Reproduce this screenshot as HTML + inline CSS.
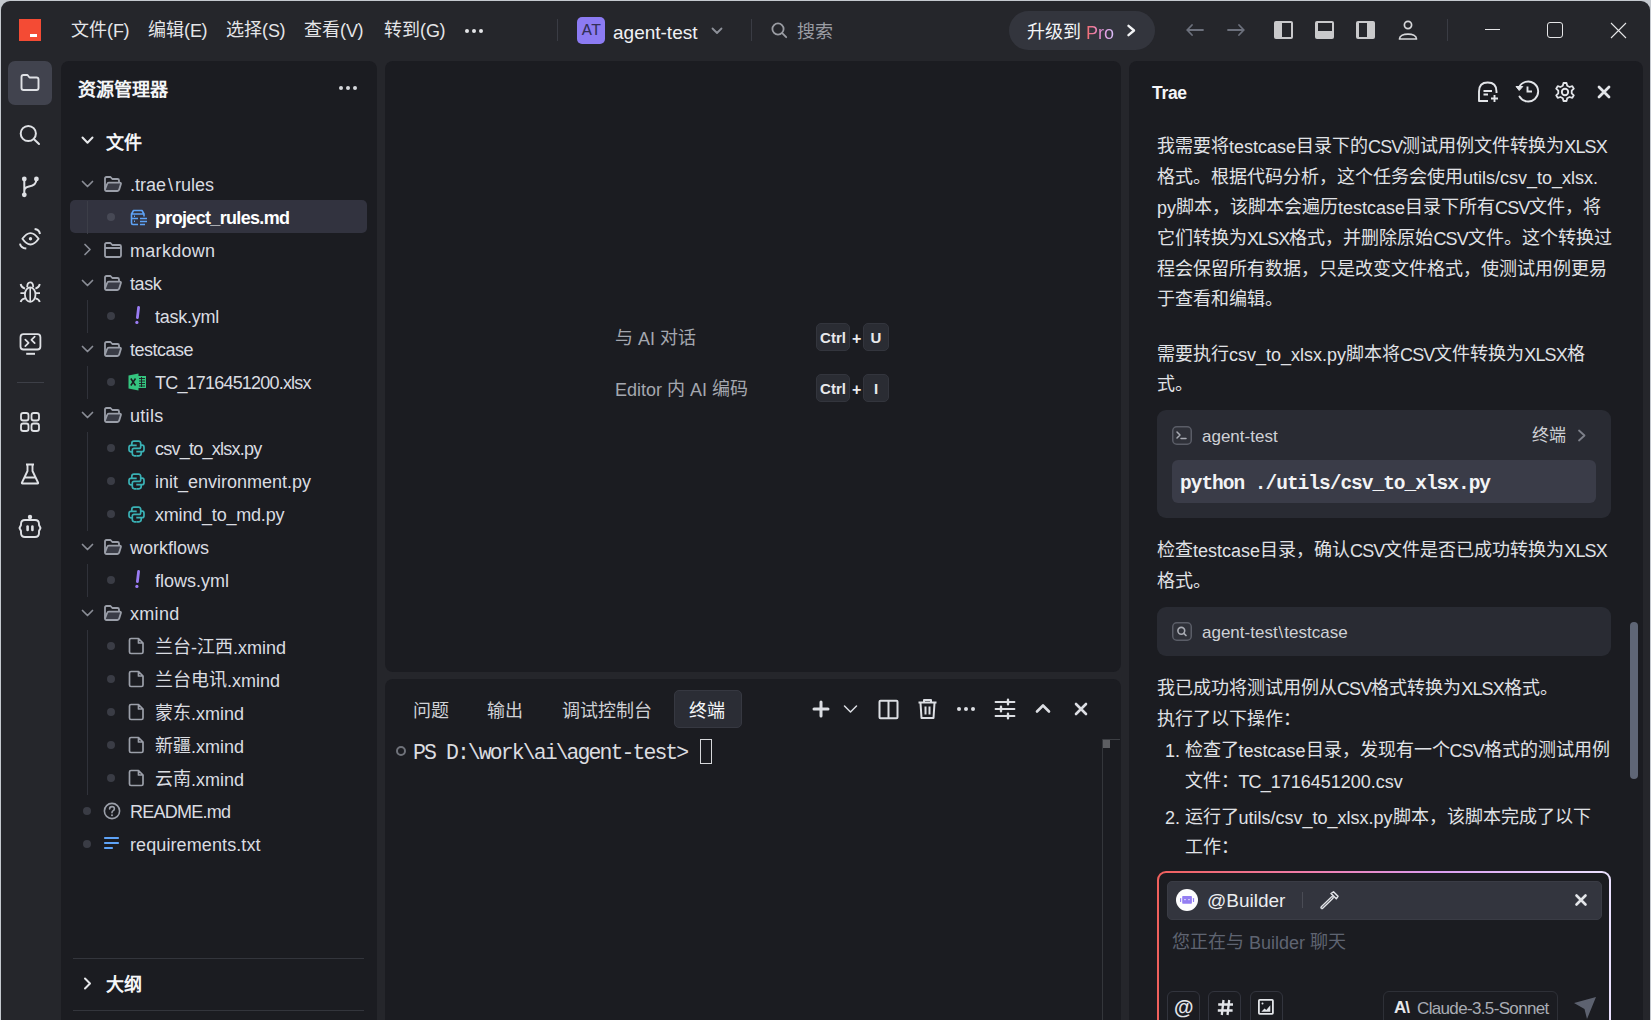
<!DOCTYPE html>
<html lang="zh-CN"><head><meta charset="utf-8">
<style>
*{box-sizing:border-box;margin:0;padding:0}
html,body{width:1651px;height:1020px;overflow:hidden;background:#c5c9cf}
body{font-family:"Liberation Sans",sans-serif;color:#d3d5da;position:relative}
.a{position:absolute;white-space:nowrap}
#win{position:absolute;left:1px;top:1px;width:1649px;height:1030px;background:#25262b;border-radius:9px 9px 0 0;overflow:hidden}
.panel{position:absolute;background:#1b1c21;border-radius:8px}
svg{position:absolute;overflow:visible}
.mono{font-family:"Liberation Mono",monospace}
</style></head>
<body>
<div id="win"></div>
<div class="panel" style="left:61px;top:61px;width:316px;height:980px"></div>
<div class="panel" style="left:385px;top:61px;width:736px;height:611px"></div>
<div class="panel" style="left:385px;top:679px;width:736px;height:360px"></div>
<div class="panel" style="left:1129px;top:61px;width:514px;height:980px"></div>

<div class="a" style="left:19px;top:19px;width:22px;height:22px;background:#f44b34"></div>
<div class="a" style="left:30px;top:34px;width:7px;height:3px;background:#fff"></div>
<div class="a" style="left:71px;top:19.2px;font-size:18px;line-height:22px;font-weight:400;color:#e4e5e8;letter-spacing:0px;">文件(<span style="position:relative;top:1px;letter-spacing:-0.6px">F</span>)</div>
<div class="a" style="left:148px;top:19.2px;font-size:18px;line-height:22px;font-weight:400;color:#e4e5e8;letter-spacing:0px;">编辑(<span style="position:relative;top:1px;letter-spacing:-0.6px">E</span>)</div>
<div class="a" style="left:226px;top:19.2px;font-size:18px;line-height:22px;font-weight:400;color:#e4e5e8;letter-spacing:0px;">选择(<span style="position:relative;top:1px;letter-spacing:-0.6px">S</span>)</div>
<div class="a" style="left:304px;top:19.2px;font-size:18px;line-height:22px;font-weight:400;color:#e4e5e8;letter-spacing:0px;">查看(<span style="position:relative;top:1px;letter-spacing:-0.6px">V</span>)</div>
<div class="a" style="left:384px;top:19.2px;font-size:18px;line-height:22px;font-weight:400;color:#e4e5e8;letter-spacing:0px;">转到(<span style="position:relative;top:1px;letter-spacing:-0.6px">G</span>)</div>
<div class="a" style="left:465px;top:29px;width:4px;height:4px;border-radius:2px;background:#e4e5e8;box-shadow:7px 0 0 #e4e5e8,14px 0 0 #e4e5e8"></div>
<div class="a" style="left:557px;top:19px;width:1px;height:22px;background:#3a3c44"></div>
<div class="a" style="left:577px;top:17px;width:28px;height:27px;background:#8c7bf3;border-radius:5px;font-family:'Liberation Mono',monospace;font-size:17px;line-height:27px;text-align:center;color:#33305a;letter-spacing:-1px">AT</div>
<div class="a" style="left:613px;top:20.5px;font-size:19px;line-height:24px;font-weight:400;color:#f0f1f4;letter-spacing:0px;">agent-test</div>
<svg style="left:711px;top:27px" width="12" height="8" viewBox="0 0 12 8"><path d="M1.5 1.5 L6 6 L10.5 1.5" fill="none" stroke="#8d9099" stroke-width="1.8" stroke-linecap="round" stroke-linejoin="round"/></svg>
<div class="a" style="left:751px;top:19px;width:1px;height:22px;background:#3a3c44"></div>
<svg style="left:771px;top:22px" width="17" height="17" viewBox="0 0 17 17"><circle cx="7" cy="7" r="5.6" fill="none" stroke="#9a9ca3" stroke-width="1.8"/><path d="M11.2 11.2 L15.2 15.2" stroke="#9a9ca3" stroke-width="1.8" stroke-linecap="round"/></svg>
<div class="a" style="left:797px;top:20.8px;font-size:18px;line-height:22px;font-weight:400;color:#9a9ca3;letter-spacing:0px;">搜索</div>
<div class="a" style="left:1009px;top:11px;width:146px;height:39px;border-radius:20px;background:#33353d"></div>
<div class="a" style="left:1027px;top:21.3px;font-size:18px;line-height:22px;font-weight:400;color:#f4f5f7;letter-spacing:0px;">升级到 <span style="position:relative;top:1px;background:linear-gradient(90deg,#f26b6b 0%,#e690d8 55%,#d9c0fa 100%);-webkit-background-clip:text;color:transparent">Pro</span></div>
<svg style="left:1126px;top:24px" width="11" height="13" viewBox="0 0 11 13"><path d="M2.5 1.8 L8 6.5 L2.5 11.2" fill="none" stroke="#f2f3f5" stroke-width="2.4" stroke-linecap="round" stroke-linejoin="round"/></svg>
<svg style="left:1186px;top:24px" width="18" height="12" viewBox="0 0 18 12"><path d="M1.2 6 H17 M6 1 L1.2 6 L6 11" fill="none" stroke="#6c707c" stroke-width="1.8" stroke-linecap="round" stroke-linejoin="round"/></svg>
<svg style="left:1227px;top:24px" width="18" height="12" viewBox="0 0 18 12"><path d="M1 6 H16.8 M12 1 L16.8 6 L12 11" fill="none" stroke="#6c707c" stroke-width="1.8" stroke-linecap="round" stroke-linejoin="round"/></svg>
<div class="a" style="left:1274px;top:21px;width:19px;height:18px;background:#c9c9cb;border-radius:2px"><div class="a" style="left:8px;top:2px;width:8.5px;height:14px;background:#25262b"></div></div>
<div class="a" style="left:1315px;top:21px;width:19px;height:18px;background:#c9c9cb;border-radius:2px"><div class="a" style="left:2.5px;top:2px;width:14px;height:8px;background:#25262b"></div></div>
<div class="a" style="left:1356px;top:21px;width:19px;height:18px;background:#c9c9cb;border-radius:2px"><div class="a" style="left:2.5px;top:2px;width:8px;height:14px;background:#25262b"></div></div>
<svg style="left:1398px;top:20px" width="20" height="21" viewBox="0 0 20 21"><circle cx="10" cy="5" r="3.6" fill="none" stroke="#d6d7da" stroke-width="1.7"/><path d="M1.5 19 C1.5 12.5 18.5 12.5 18.5 19 Z" fill="none" stroke="#d6d7da" stroke-width="1.7" stroke-linejoin="round"/></svg>
<div class="a" style="left:1447px;top:19px;width:1px;height:22px;background:#3a3c44"></div>
<div class="a" style="left:1485px;top:29px;width:15px;height:1px;background:#e6e6e8"></div>
<div class="a" style="left:1547px;top:22px;width:16px;height:16px;border:1px solid #e6e6e8;border-radius:3px"></div>
<svg style="left:1610px;top:22px" width="17" height="17" viewBox="0 0 17 17"><path d="M1 1 L16 16 M16 1 L1 16" stroke="#e6e6e8" stroke-width="1.1"/></svg>
<div class="a" style="left:8px;top:61px;width:44px;height:44px;background:#41434e;border-radius:7px"></div>
<svg style="left:20px;top:73px" width="20" height="19" viewBox="0 0 20 19"><path d="M1.5 4 Q1.5 2 3.5 2 H7.5 L9.5 4.5 H16.5 Q18.5 4.5 18.5 6.5 V15 Q18.5 17 16.5 17 H3.5 Q1.5 17 1.5 15 Z" fill="none" stroke="#dfe1e5" stroke-width="1.9" stroke-linejoin="round"/></svg>
<svg style="left:18px;top:122px" width="24" height="24" viewBox="0 0 24 24"><circle cx="10.3" cy="11.5" r="7.6" fill="none" stroke="#dfe1e5" stroke-width="2"/><path d="M16 17.2 L21 22" stroke="#dfe1e5" stroke-width="2" stroke-linecap="round"/></svg>
<svg style="left:18px;top:174px" width="24" height="24" viewBox="0 0 24 24"><circle cx="6.3" cy="5" r="2.4" fill="#dfe1e5"/><circle cx="18.4" cy="5" r="2.4" fill="#dfe1e5"/><circle cx="6.3" cy="20.8" r="2.4" fill="#dfe1e5"/><path d="M6.3 5 V20.8 M18.4 5 Q18.4 11.5 11 12.5 Q6.3 13.2 6.3 17" fill="none" stroke="#dfe1e5" stroke-width="2"/></svg>
<svg style="left:10px;top:220px" width="40" height="40" viewBox="0 0 40 40"><path d="M12.4 18.8 Q20.5 7.4 28.6 18.8 Q20.5 30.2 12.4 18.8 Z" fill="none" stroke="#dfe1e5" stroke-width="1.9" stroke-linejoin="round"/><circle cx="20.5" cy="18.8" r="1.7" fill="#dfe1e5"/><path d="M24.6 9 Q29.3 9.6 30 14" fill="none" stroke="#dfe1e5" stroke-width="2" stroke-linecap="butt"/><path d="M10 23.6 Q10.7 28 16.3 28.6" fill="none" stroke="#dfe1e5" stroke-width="2" stroke-linecap="butt"/></svg>
<svg style="left:10px;top:275px" width="40" height="85" viewBox="0 0 40 85"><path d="M17.2 12.2 Q17.2 7.3 20.2 7.3 Q23.2 7.3 23.2 12.2" fill="none" stroke="#dfe1e5" stroke-width="1.8"/><ellipse cx="20.2" cy="19.6" rx="5.3" ry="7.2" fill="none" stroke="#dfe1e5" stroke-width="1.8"/><path d="M20.2 12.5 V26.6" stroke="#dfe1e5" stroke-width="1.6"/><path d="M10.6 9 Q11.4 12.6 15 13.6 M29.8 9 Q29 12.6 25.4 13.6 M10.4 18.2 H15 M25.4 18.2 H30 M15 23.4 Q11.4 24 10.6 27 M25.4 23.4 Q29 24 29.8 27" fill="none" stroke="#dfe1e5" stroke-width="1.8" stroke-linecap="butt"/></svg>
<svg style="left:10px;top:275px" width="40" height="85" viewBox="0 0 40 85"><rect x="10.5" y="59.2" width="19.9" height="15.3" rx="3" fill="none" stroke="#dfe1e5" stroke-width="1.8"/><path d="M16.2 78.8 H25" stroke="#dfe1e5" stroke-width="2"/><path d="M15.3 64.6 L18.6 67.9 L15.3 71.2 M24.7 61.6 L21.4 64.9 L24.7 68.2" fill="none" stroke="#dfe1e5" stroke-width="1.7" stroke-linecap="round" stroke-linejoin="round"/></svg>
<div class="a" style="left:17px;top:382px;width:27px;height:1px;background:#3d3f47"></div>
<svg style="left:18px;top:410px" width="24" height="24" viewBox="0 0 24 24"><rect x="3" y="3" width="7.5" height="7.5" rx="2.3" fill="none" stroke="#dfe1e5" stroke-width="1.8"/><rect x="13.5" y="3" width="7.5" height="7.5" rx="2.3" fill="none" stroke="#dfe1e5" stroke-width="1.8"/><rect x="3" y="13.5" width="7.5" height="7.5" rx="2.3" fill="none" stroke="#dfe1e5" stroke-width="1.8"/><rect x="13.5" y="13.5" width="7.5" height="7.5" rx="2.3" fill="none" stroke="#dfe1e5" stroke-width="1.8"/></svg>
<svg style="left:18px;top:462px" width="24" height="24" viewBox="0 0 24 24"><path d="M8 2.5 H16 M9.5 2.5 V9 L4 20.5 Q3.5 21.5 4.5 21.5 H19.5 Q20.5 21.5 20 20.5 L14.5 9 V2.5 M6.5 15.5 H17.5" fill="none" stroke="#dfe1e5" stroke-width="1.9" stroke-linejoin="round"/></svg>
<svg style="left:18px;top:514px" width="24" height="25" viewBox="0 0 24 25"><circle cx="12" cy="3" r="2.2" fill="#dfe1e5"/><path d="M7 6 H17 Q21 6 21 10 V11 L22.5 14 L21 17 V19 Q21 23 17 23 H7 Q3 23 3 19 V17 L1.5 14 L3 11 V10 Q3 6 7 6 Z" fill="none" stroke="#dfe1e5" stroke-width="1.9" stroke-linejoin="round"/><rect x="8.3" y="11.3" width="2.6" height="6" rx="1.3" fill="#dfe1e5"/><rect x="13.1" y="11.3" width="2.6" height="6" rx="1.3" fill="#dfe1e5"/></svg>
<div class="a" style="left:78px;top:78.5px;font-size:18px;line-height:22px;font-weight:700;color:#f5f6f8;letter-spacing:0px;">资源管理器</div>
<div class="a" style="left:339px;top:86px;width:4px;height:4px;border-radius:2px;background:#d6d8dc;box-shadow:7px 0 0 #d6d8dc,14px 0 0 #d6d8dc"></div>
<svg style="left:81px;top:136px" width="13" height="9" viewBox="0 0 13 9"><path d="M1.5 1.5 L6.5 6.8 L11.5 1.5" fill="none" stroke="#e6e7ea" stroke-width="2" stroke-linecap="round" stroke-linejoin="round"/></svg>
<div class="a" style="left:106px;top:131.5px;font-size:18px;line-height:22px;font-weight:700;color:#f5f6f8;letter-spacing:0px;">文件</div>
<div class="a" style="left:70px;top:200px;width:297px;height:33px;background:#32333f;border-radius:5px"></div>
<div class="a" style="left:87px;top:201px;width:1px;height:33px;background:#3c3e48"></div>
<div class="a" style="left:87px;top:300px;width:1px;height:33px;background:#30323a"></div>
<div class="a" style="left:87px;top:366px;width:1px;height:33px;background:#30323a"></div>
<div class="a" style="left:87px;top:432px;width:1px;height:99px;background:#30323a"></div>
<div class="a" style="left:87px;top:564px;width:1px;height:33px;background:#30323a"></div>
<div class="a" style="left:87px;top:630px;width:1px;height:165px;background:#30323a"></div>
<svg style="left:81px;top:180px" width="13" height="9" viewBox="0 0 13 9"><path d="M1.5 1.5 L6.5 6.5 L11.5 1.5" fill="none" stroke="#8a8d96" stroke-width="1.7" stroke-linecap="round" stroke-linejoin="round"/></svg>
<svg style="left:103px;top:175px" width="20" height="18" viewBox="0 0 20 18"><path d="M2 14.5 V3.5 Q2 2 3.5 2 H7.5 L9.3 4 H14.5 Q16 4 16 5.5 V7.5" fill="none" stroke="#9b9fa9" stroke-width="1.8" stroke-linejoin="round"/><path d="M2 14.5 L4.2 8.8 Q4.6 7.6 5.8 7.6 H16.8 Q18.3 7.6 17.9 9 L16.2 14.6 Q15.8 16 14.4 16 H3.5 Q2 16 2 14.5 Z" fill="#3a3c46" stroke="#9b9fa9" stroke-width="1.8" stroke-linejoin="round"/></svg>
<div class="a" style="left:130px;top:174px;font-size:18px;line-height:22px;font-weight:400;color:#dadce1;letter-spacing:0px;">.trae<span style="padding:0 2px">\</span>rules</div>
<div class="a" style="left:107px;top:213px;width:8px;height:8px;border-radius:4px;background:#474955"></div>
<svg style="left:130px;top:209px" width="18" height="17" viewBox="0 0 18 17"><path d="M1.5 9 V5 L3.5 1.5 H12 L14 5 V7.5 M1.5 5 H14 M1.5 9 V14 Q1.5 15.5 3 15.5 H8" fill="none" stroke="#5ea3f7" stroke-width="1.6" stroke-linejoin="round"/><path d="M1.5 9.5 H8 M4 7.3 H5 M4 12.3 H5 M10 9.5 H17 M10 12.5 H17 M10 15.5 H15" stroke="#5ea3f7" stroke-width="1.6"/></svg>
<div class="a" style="left:155px;top:207px;font-size:18px;line-height:22px;font-weight:700;color:#ffffff;letter-spacing:-0.67px;">project_rules.md</div>
<svg style="left:83px;top:243px" width="9" height="13" viewBox="0 0 9 13"><path d="M2 1.5 L7 6.5 L2 11.5" fill="none" stroke="#8a8d96" stroke-width="1.7" stroke-linecap="round" stroke-linejoin="round"/></svg>
<svg style="left:103px;top:241px" width="20" height="18" viewBox="0 0 20 18"><path d="M2 3.5 Q2 2 3.5 2 H7.5 L9.3 4 H16.5 Q18 4 18 5.5 V14.5 Q18 16 16.5 16 H3.5 Q2 16 2 14.5 Z M2 7 H18" fill="none" stroke="#9b9fa9" stroke-width="1.8" stroke-linejoin="round"/></svg>
<div class="a" style="left:130px;top:240px;font-size:18px;line-height:22px;font-weight:400;color:#dadce1;letter-spacing:0.3px;">markdown</div>
<svg style="left:81px;top:279px" width="13" height="9" viewBox="0 0 13 9"><path d="M1.5 1.5 L6.5 6.5 L11.5 1.5" fill="none" stroke="#8a8d96" stroke-width="1.7" stroke-linecap="round" stroke-linejoin="round"/></svg>
<svg style="left:103px;top:274px" width="20" height="18" viewBox="0 0 20 18"><path d="M2 14.5 V3.5 Q2 2 3.5 2 H7.5 L9.3 4 H14.5 Q16 4 16 5.5 V7.5" fill="none" stroke="#9b9fa9" stroke-width="1.8" stroke-linejoin="round"/><path d="M2 14.5 L4.2 8.8 Q4.6 7.6 5.8 7.6 H16.8 Q18.3 7.6 17.9 9 L16.2 14.6 Q15.8 16 14.4 16 H3.5 Q2 16 2 14.5 Z" fill="#3a3c46" stroke="#9b9fa9" stroke-width="1.8" stroke-linejoin="round"/></svg>
<div class="a" style="left:130px;top:273px;font-size:18px;line-height:22px;font-weight:400;color:#dadce1;letter-spacing:-0.4px;">task</div>
<div class="a" style="left:107px;top:312px;width:8px;height:8px;border-radius:4px;background:#3a3c45"></div>
<svg style="left:133px;top:306px" width="8" height="19" viewBox="0 0 8 19"><path d="M5.6 1.4 L4.4 11.6" stroke="#9a7cf4" stroke-width="2.8" stroke-linecap="round"/><circle cx="3.9" cy="16.4" r="1.6" fill="#9a7cf4"/></svg>
<div class="a" style="left:155px;top:306px;font-size:18px;line-height:22px;font-weight:400;color:#dadce1;letter-spacing:-0.25px;">task.yml</div>
<svg style="left:81px;top:345px" width="13" height="9" viewBox="0 0 13 9"><path d="M1.5 1.5 L6.5 6.5 L11.5 1.5" fill="none" stroke="#8a8d96" stroke-width="1.7" stroke-linecap="round" stroke-linejoin="round"/></svg>
<svg style="left:103px;top:340px" width="20" height="18" viewBox="0 0 20 18"><path d="M2 14.5 V3.5 Q2 2 3.5 2 H7.5 L9.3 4 H14.5 Q16 4 16 5.5 V7.5" fill="none" stroke="#9b9fa9" stroke-width="1.8" stroke-linejoin="round"/><path d="M2 14.5 L4.2 8.8 Q4.6 7.6 5.8 7.6 H16.8 Q18.3 7.6 17.9 9 L16.2 14.6 Q15.8 16 14.4 16 H3.5 Q2 16 2 14.5 Z" fill="#3a3c46" stroke="#9b9fa9" stroke-width="1.8" stroke-linejoin="round"/></svg>
<div class="a" style="left:130px;top:339px;font-size:18px;line-height:22px;font-weight:400;color:#dadce1;letter-spacing:-0.5px;">testcase</div>
<div class="a" style="left:107px;top:378px;width:8px;height:8px;border-radius:4px;background:#3a3c45"></div>
<svg style="left:128px;top:373px" width="19" height="18" viewBox="0 0 19 18"><path d="M0.5 2.5 L10.5 0.5 V17.5 L0.5 15.5 Z" fill="#34c47f"/><rect x="10" y="3" width="8" height="12" fill="#34c47f"/><path d="M11 5.5 H17 M11 8 H17 M11 10.5 H17 M11 13 H17 M13.5 4 V14" stroke="#1b1c20" stroke-width="0.9"/><path d="M2.8 5.5 L7.5 12.5 M7.5 5.5 L2.8 12.5" stroke="#1b1c20" stroke-width="1.5"/></svg>
<div class="a" style="left:155px;top:372px;font-size:18px;line-height:22px;font-weight:400;color:#dadce1;letter-spacing:-0.8px;">TC_1716451200.xlsx</div>
<svg style="left:81px;top:411px" width="13" height="9" viewBox="0 0 13 9"><path d="M1.5 1.5 L6.5 6.5 L11.5 1.5" fill="none" stroke="#8a8d96" stroke-width="1.7" stroke-linecap="round" stroke-linejoin="round"/></svg>
<svg style="left:103px;top:406px" width="20" height="18" viewBox="0 0 20 18"><path d="M2 14.5 V3.5 Q2 2 3.5 2 H7.5 L9.3 4 H14.5 Q16 4 16 5.5 V7.5" fill="none" stroke="#9b9fa9" stroke-width="1.8" stroke-linejoin="round"/><path d="M2 14.5 L4.2 8.8 Q4.6 7.6 5.8 7.6 H16.8 Q18.3 7.6 17.9 9 L16.2 14.6 Q15.8 16 14.4 16 H3.5 Q2 16 2 14.5 Z" fill="#3a3c46" stroke="#9b9fa9" stroke-width="1.8" stroke-linejoin="round"/></svg>
<div class="a" style="left:130px;top:405px;font-size:18px;line-height:22px;font-weight:400;color:#dadce1;letter-spacing:0.3px;">utils</div>
<div class="a" style="left:107px;top:444px;width:8px;height:8px;border-radius:4px;background:#3a3c45"></div>
<svg style="left:128px;top:440px" width="17" height="17" viewBox="0 0 17 17"><path d="M8.5 1.2 H6 Q3.8 1.2 3.8 3.4 V5.3 H8.7 M3.8 5.3 H2.8 Q1 5.3 1 7.6 V9.6 Q1 11.8 2.8 11.8 H4.3 V10.1 Q4.3 8.4 6 8.4 H11 Q12.7 8.4 12.7 6.7 V3.4 Q12.7 1.2 10.5 1.2 H8.5" fill="none" stroke="#3ab1b5" stroke-width="1.7" stroke-linejoin="round"/><path d="M8.5 15.8 H11 Q13.2 15.8 13.2 13.6 V11.7 H8.3 M13.2 11.7 H14.2 Q16 11.7 16 9.4 V7.4 Q16 5.2 14.2 5.2 H12.7" fill="none" stroke="#3ab1b5" stroke-width="1.7" stroke-linejoin="round"/><path d="M4.3 11.8 V13.6 Q4.3 15.8 6.5 15.8 H8.5" fill="none" stroke="#3ab1b5" stroke-width="1.7"/></svg>
<div class="a" style="left:155px;top:438px;font-size:18px;line-height:22px;font-weight:400;color:#dadce1;letter-spacing:-0.75px;">csv_to_xlsx.py</div>
<div class="a" style="left:107px;top:477px;width:8px;height:8px;border-radius:4px;background:#3a3c45"></div>
<svg style="left:128px;top:473px" width="17" height="17" viewBox="0 0 17 17"><path d="M8.5 1.2 H6 Q3.8 1.2 3.8 3.4 V5.3 H8.7 M3.8 5.3 H2.8 Q1 5.3 1 7.6 V9.6 Q1 11.8 2.8 11.8 H4.3 V10.1 Q4.3 8.4 6 8.4 H11 Q12.7 8.4 12.7 6.7 V3.4 Q12.7 1.2 10.5 1.2 H8.5" fill="none" stroke="#3ab1b5" stroke-width="1.7" stroke-linejoin="round"/><path d="M8.5 15.8 H11 Q13.2 15.8 13.2 13.6 V11.7 H8.3 M13.2 11.7 H14.2 Q16 11.7 16 9.4 V7.4 Q16 5.2 14.2 5.2 H12.7" fill="none" stroke="#3ab1b5" stroke-width="1.7" stroke-linejoin="round"/><path d="M4.3 11.8 V13.6 Q4.3 15.8 6.5 15.8 H8.5" fill="none" stroke="#3ab1b5" stroke-width="1.7"/></svg>
<div class="a" style="left:155px;top:471px;font-size:18px;line-height:22px;font-weight:400;color:#dadce1;letter-spacing:0px;">init_environment.py</div>
<div class="a" style="left:107px;top:510px;width:8px;height:8px;border-radius:4px;background:#3a3c45"></div>
<svg style="left:128px;top:506px" width="17" height="17" viewBox="0 0 17 17"><path d="M8.5 1.2 H6 Q3.8 1.2 3.8 3.4 V5.3 H8.7 M3.8 5.3 H2.8 Q1 5.3 1 7.6 V9.6 Q1 11.8 2.8 11.8 H4.3 V10.1 Q4.3 8.4 6 8.4 H11 Q12.7 8.4 12.7 6.7 V3.4 Q12.7 1.2 10.5 1.2 H8.5" fill="none" stroke="#3ab1b5" stroke-width="1.7" stroke-linejoin="round"/><path d="M8.5 15.8 H11 Q13.2 15.8 13.2 13.6 V11.7 H8.3 M13.2 11.7 H14.2 Q16 11.7 16 9.4 V7.4 Q16 5.2 14.2 5.2 H12.7" fill="none" stroke="#3ab1b5" stroke-width="1.7" stroke-linejoin="round"/><path d="M4.3 11.8 V13.6 Q4.3 15.8 6.5 15.8 H8.5" fill="none" stroke="#3ab1b5" stroke-width="1.7"/></svg>
<div class="a" style="left:155px;top:504px;font-size:18px;line-height:22px;font-weight:400;color:#dadce1;letter-spacing:-0.2px;">xmind_to_md.py</div>
<svg style="left:81px;top:543px" width="13" height="9" viewBox="0 0 13 9"><path d="M1.5 1.5 L6.5 6.5 L11.5 1.5" fill="none" stroke="#8a8d96" stroke-width="1.7" stroke-linecap="round" stroke-linejoin="round"/></svg>
<svg style="left:103px;top:538px" width="20" height="18" viewBox="0 0 20 18"><path d="M2 14.5 V3.5 Q2 2 3.5 2 H7.5 L9.3 4 H14.5 Q16 4 16 5.5 V7.5" fill="none" stroke="#9b9fa9" stroke-width="1.8" stroke-linejoin="round"/><path d="M2 14.5 L4.2 8.8 Q4.6 7.6 5.8 7.6 H16.8 Q18.3 7.6 17.9 9 L16.2 14.6 Q15.8 16 14.4 16 H3.5 Q2 16 2 14.5 Z" fill="#3a3c46" stroke="#9b9fa9" stroke-width="1.8" stroke-linejoin="round"/></svg>
<div class="a" style="left:130px;top:537px;font-size:18px;line-height:22px;font-weight:400;color:#dadce1;letter-spacing:0px;">workflows</div>
<div class="a" style="left:107px;top:576px;width:8px;height:8px;border-radius:4px;background:#3a3c45"></div>
<svg style="left:133px;top:570px" width="8" height="19" viewBox="0 0 8 19"><path d="M5.6 1.4 L4.4 11.6" stroke="#9a7cf4" stroke-width="2.8" stroke-linecap="round"/><circle cx="3.9" cy="16.4" r="1.6" fill="#9a7cf4"/></svg>
<div class="a" style="left:155px;top:570px;font-size:18px;line-height:22px;font-weight:400;color:#dadce1;letter-spacing:0px;">flows.yml</div>
<svg style="left:81px;top:609px" width="13" height="9" viewBox="0 0 13 9"><path d="M1.5 1.5 L6.5 6.5 L11.5 1.5" fill="none" stroke="#8a8d96" stroke-width="1.7" stroke-linecap="round" stroke-linejoin="round"/></svg>
<svg style="left:103px;top:604px" width="20" height="18" viewBox="0 0 20 18"><path d="M2 14.5 V3.5 Q2 2 3.5 2 H7.5 L9.3 4 H14.5 Q16 4 16 5.5 V7.5" fill="none" stroke="#9b9fa9" stroke-width="1.8" stroke-linejoin="round"/><path d="M2 14.5 L4.2 8.8 Q4.6 7.6 5.8 7.6 H16.8 Q18.3 7.6 17.9 9 L16.2 14.6 Q15.8 16 14.4 16 H3.5 Q2 16 2 14.5 Z" fill="#3a3c46" stroke="#9b9fa9" stroke-width="1.8" stroke-linejoin="round"/></svg>
<div class="a" style="left:130px;top:603px;font-size:18px;line-height:22px;font-weight:400;color:#dadce1;letter-spacing:0.3px;">xmind</div>
<div class="a" style="left:107px;top:642px;width:8px;height:8px;border-radius:4px;background:#3a3c45"></div>
<svg style="left:128px;top:637px" width="17" height="18" viewBox="0 0 17 18"><path d="M3 1.5 H10.5 L15 6 V15 Q15 16.5 13.5 16.5 H3 Q1.5 16.5 1.5 15 V3 Q1.5 1.5 3 1.5 Z M10.5 1.5 V6 H15" fill="none" stroke="#9b9fa9" stroke-width="1.7" stroke-linejoin="round"/></svg>
<div class="a" style="left:155px;top:635.5px;font-size:18px;line-height:22px;font-weight:400;color:#dadce1;letter-spacing:0px;">兰台<span style="position:relative;top:1px;letter-spacing:0.0px">-</span>江西<span style="position:relative;top:1px;letter-spacing:0.0px">.xmind</span></div>
<div class="a" style="left:107px;top:675px;width:8px;height:8px;border-radius:4px;background:#3a3c45"></div>
<svg style="left:128px;top:670px" width="17" height="18" viewBox="0 0 17 18"><path d="M3 1.5 H10.5 L15 6 V15 Q15 16.5 13.5 16.5 H3 Q1.5 16.5 1.5 15 V3 Q1.5 1.5 3 1.5 Z M10.5 1.5 V6 H15" fill="none" stroke="#9b9fa9" stroke-width="1.7" stroke-linejoin="round"/></svg>
<div class="a" style="left:155px;top:668.5px;font-size:18px;line-height:22px;font-weight:400;color:#dadce1;letter-spacing:0px;">兰台电讯<span style="position:relative;top:1px;letter-spacing:0.0px">.xmind</span></div>
<div class="a" style="left:107px;top:708px;width:8px;height:8px;border-radius:4px;background:#3a3c45"></div>
<svg style="left:128px;top:703px" width="17" height="18" viewBox="0 0 17 18"><path d="M3 1.5 H10.5 L15 6 V15 Q15 16.5 13.5 16.5 H3 Q1.5 16.5 1.5 15 V3 Q1.5 1.5 3 1.5 Z M10.5 1.5 V6 H15" fill="none" stroke="#9b9fa9" stroke-width="1.7" stroke-linejoin="round"/></svg>
<div class="a" style="left:155px;top:701.5px;font-size:18px;line-height:22px;font-weight:400;color:#dadce1;letter-spacing:0px;">蒙东<span style="position:relative;top:1px;letter-spacing:0.0px">.xmind</span></div>
<div class="a" style="left:107px;top:741px;width:8px;height:8px;border-radius:4px;background:#3a3c45"></div>
<svg style="left:128px;top:736px" width="17" height="18" viewBox="0 0 17 18"><path d="M3 1.5 H10.5 L15 6 V15 Q15 16.5 13.5 16.5 H3 Q1.5 16.5 1.5 15 V3 Q1.5 1.5 3 1.5 Z M10.5 1.5 V6 H15" fill="none" stroke="#9b9fa9" stroke-width="1.7" stroke-linejoin="round"/></svg>
<div class="a" style="left:155px;top:734.5px;font-size:18px;line-height:22px;font-weight:400;color:#dadce1;letter-spacing:0px;">新疆<span style="position:relative;top:1px;letter-spacing:0.0px">.xmind</span></div>
<div class="a" style="left:107px;top:774px;width:8px;height:8px;border-radius:4px;background:#3a3c45"></div>
<svg style="left:128px;top:769px" width="17" height="18" viewBox="0 0 17 18"><path d="M3 1.5 H10.5 L15 6 V15 Q15 16.5 13.5 16.5 H3 Q1.5 16.5 1.5 15 V3 Q1.5 1.5 3 1.5 Z M10.5 1.5 V6 H15" fill="none" stroke="#9b9fa9" stroke-width="1.7" stroke-linejoin="round"/></svg>
<div class="a" style="left:155px;top:767.5px;font-size:18px;line-height:22px;font-weight:400;color:#dadce1;letter-spacing:0px;">云南<span style="position:relative;top:1px;letter-spacing:0.0px">.xmind</span></div>
<div class="a" style="left:83px;top:807px;width:8px;height:8px;border-radius:4px;background:#3a3c45"></div>
<svg style="left:103px;top:802px" width="18" height="18" viewBox="0 0 18 18"><circle cx="9" cy="9" r="7.6" fill="none" stroke="#9b9fa9" stroke-width="1.6"/><path d="M6.6 7 Q6.6 4.6 9 4.6 Q11.4 4.6 11.4 6.8 Q11.4 8.2 9.9 8.9 Q9 9.4 9 10.8" fill="none" stroke="#9b9fa9" stroke-width="1.6" stroke-linecap="round"/><circle cx="9" cy="13.2" r="1" fill="#9b9fa9"/></svg>
<div class="a" style="left:130px;top:801px;font-size:18px;line-height:22px;font-weight:400;color:#dadce1;letter-spacing:-0.75px;">README.md</div>
<div class="a" style="left:83px;top:840px;width:8px;height:8px;border-radius:4px;background:#3a3c45"></div>
<svg style="left:103px;top:835px" width="18" height="18" viewBox="0 0 18 18"><path d="M2 3 H15 M2 8 H15 M2 13 H9" stroke="#5ea3f7" stroke-width="2.2" stroke-linecap="round"/></svg>
<div class="a" style="left:130px;top:834px;font-size:18px;line-height:22px;font-weight:400;color:#dadce1;letter-spacing:0.1px;">requirements.txt</div>
<div class="a" style="left:73px;top:958px;width:291px;height:1px;background:#33353c"></div>
<svg style="left:83px;top:977px" width="9" height="13" viewBox="0 0 9 13"><path d="M2 1.5 L7 6.5 L2 11.5" fill="none" stroke="#e6e7ea" stroke-width="2" stroke-linecap="round" stroke-linejoin="round"/></svg>
<div class="a" style="left:106px;top:973.5px;font-size:18px;line-height:22px;font-weight:700;color:#f5f6f8;letter-spacing:0px;">大纲</div>
<div class="a" style="left:73px;top:1010px;width:291px;height:1px;background:#33353c"></div>
<div class="a" style="left:615px;top:326.5px;font-size:18px;line-height:22px;font-weight:400;color:#a4a7af;letter-spacing:0px;">与 <span style="position:relative;top:1px;letter-spacing:0.0px"><span style="letter-spacing:0px">AI</span></span> 对话</div>
<div class="a" style="left:816px;top:323px;width:34px;height:28px;background:#2a2c33;border:1px solid #33353d;border-radius:5px;font-size:15px;line-height:27px;font-weight:700;text-align:center;color:#e8e9ec">Ctrl</div>
<div class="a" style="left:852px;top:327.5px;font-size:16px;line-height:22px;font-weight:700;color:#e8e9ec;letter-spacing:0px;">+</div>
<div class="a" style="left:863px;top:323px;width:26px;height:28px;background:#2a2c33;border:1px solid #33353d;border-radius:5px;font-size:15px;line-height:27px;font-weight:700;text-align:center;color:#e8e9ec">U</div>
<div class="a" style="left:615px;top:377.5px;font-size:18px;line-height:22px;font-weight:400;color:#a4a7af;letter-spacing:0px;"><span style="position:relative;top:1px;letter-spacing:0.0px">Editor</span> 内 <span style="position:relative;top:1px;letter-spacing:0.0px"><span style="letter-spacing:0px">AI</span></span> 编码</div>
<div class="a" style="left:816px;top:374px;width:34px;height:28px;background:#2a2c33;border:1px solid #33353d;border-radius:5px;font-size:15px;line-height:27px;font-weight:700;text-align:center;color:#e8e9ec">Ctrl</div>
<div class="a" style="left:852px;top:378.5px;font-size:16px;line-height:22px;font-weight:700;color:#e8e9ec;letter-spacing:0px;">+</div>
<div class="a" style="left:863px;top:374px;width:26px;height:28px;background:#2a2c33;border:1px solid #33353d;border-radius:5px;font-size:15px;line-height:27px;font-weight:700;text-align:center;color:#e8e9ec">I</div>
<div class="a" style="left:413px;top:699.5px;font-size:18px;line-height:22px;font-weight:400;color:#cfd1d6;letter-spacing:0px;">问题</div>
<div class="a" style="left:487px;top:699.5px;font-size:18px;line-height:22px;font-weight:400;color:#cfd1d6;letter-spacing:0px;">输出</div>
<div class="a" style="left:562px;top:699.5px;font-size:18px;line-height:22px;font-weight:400;color:#cfd1d6;letter-spacing:0px;">调试控制台</div>
<div class="a" style="left:674px;top:690px;width:68px;height:38px;background:#2b2d35;border:1px solid #363841;border-radius:5px"></div>
<div class="a" style="left:689px;top:699.5px;font-size:18px;line-height:22px;font-weight:400;color:#f4f5f7;letter-spacing:0px;">终端</div>
<svg style="left:812px;top:700px" width="18" height="18" viewBox="0 0 18 18"><path d="M9 2 V16 M2 9 H16" stroke="#dcdee3" stroke-width="3" stroke-linecap="round"/></svg>
<svg style="left:843px;top:704px" width="15" height="10" viewBox="0 0 15 10"><path d="M1.5 2 L7.5 8 L13.5 2" fill="none" stroke="#dcdee3" stroke-width="1.5" stroke-linecap="round" stroke-linejoin="round"/></svg>
<svg style="left:878px;top:699px" width="21" height="21" viewBox="0 0 21 21"><rect x="1.5" y="1.8" width="18" height="17.5" rx="1" fill="none" stroke="#dcdee3" stroke-width="2"/><path d="M10.5 2 V19" stroke="#dcdee3" stroke-width="2"/></svg>
<svg style="left:917px;top:698px" width="21" height="22" viewBox="0 0 21 22"><path d="M1.5 4.5 H19.5 M7 4 V2 H14 V4 M3.5 5 L4.5 20 H16.5 L17.5 5 M8.5 8.5 V16.5 M12.5 8.5 V16.5" fill="none" stroke="#dcdee3" stroke-width="2" stroke-linejoin="round"/></svg>
<div class="a" style="left:957px;top:707px;width:4px;height:4px;border-radius:2px;background:#dcdee3;box-shadow:7px 0 0 #dcdee3,14px 0 0 #dcdee3"></div>
<svg style="left:994px;top:699px" width="22" height="20" viewBox="0 0 22 20"><path d="M1.5 3 H20.5 M1.5 10 H20.5 M1.5 17 H20.5" stroke="#dcdee3" stroke-width="1.8" stroke-linecap="round"/><path d="M14 0.8 V5.2 M7 7.8 V12.2 M14 14.8 V19.2" stroke="#dcdee3" stroke-width="2.4" stroke-linecap="round"/></svg>
<svg style="left:1035px;top:702px" width="16" height="12" viewBox="0 0 16 12"><path d="M2 9.5 L8 3.5 L14 9.5" fill="none" stroke="#dcdee3" stroke-width="2.6" stroke-linecap="round" stroke-linejoin="round"/></svg>
<svg style="left:1074px;top:702px" width="14" height="14" viewBox="0 0 14 14"><path d="M2 2 L12 12 M12 2 L2 12" stroke="#dcdee3" stroke-width="2.6" stroke-linecap="round"/></svg>
<div class="a" style="left:396px;top:746px;width:10px;height:10px;border:2px solid #6f727a;border-radius:50%"></div>
<div class="a mono" style="left:413px;top:742px;font-size:21.5px;line-height:22px;letter-spacing:-1.93px;color:#dcdde0">PS D:\work\ai\agent-test&gt;</div>
<div class="a" style="left:700px;top:739px;width:12px;height:25px;border:1px solid #d6d7da"></div>
<div class="a" style="left:1102px;top:739px;width:18px;height:1px;background:#3d3f44"></div>
<div class="a" style="left:1102px;top:739px;width:1px;height:300px;background:#34363b"></div>
<div class="a" style="left:1103px;top:740px;width:7px;height:8px;background:#5d5e62"></div>
<div class="a" style="left:1152px;top:82px;font-size:17.5px;line-height:22px;font-weight:700;color:#f5f6f8;letter-spacing:-0.3px">Trae</div>
<svg style="left:1477px;top:81px" width="23" height="22" viewBox="0 0 23 22"><path d="M11 20 H2 V10.5 Q2 1.5 10.7 1.5 Q19.5 1.5 19.5 10.5 V12" fill="none" stroke="#e3e5e9" stroke-width="1.9" stroke-linejoin="round"/><path d="M6.5 10 H15 M6.5 13.5 H11" stroke="#e3e5e9" stroke-width="1.9"/><path d="M17.5 14 V21 M14 17.5 H21" stroke="#e3e5e9" stroke-width="1.9"/></svg>
<svg style="left:1515px;top:80px" width="24" height="23" viewBox="0 0 24 23"><path d="M4 7.5 A10 10 0 1 1 4.5 16.5" fill="none" stroke="#e3e5e9" stroke-width="1.9" stroke-linecap="round"/><path d="M1 6.5 L4.2 10.5 L7.8 6.5 Z" fill="#e3e5e9" stroke="#e3e5e9" stroke-width="1" stroke-linejoin="round"/><path d="M12.5 6.5 V11.5 H17" fill="none" stroke="#e3e5e9" stroke-width="1.9"/></svg>
<svg style="left:1554px;top:81px" width="22" height="22" viewBox="0 0 22 21"><path d="M9.5 1.5 H12.5 L13.2 4.3 L15.6 5.5 L18.3 4.6 L19.8 7.2 L17.7 9.2 V11.8 L19.8 13.8 L18.3 16.4 L15.6 15.5 L13.2 16.7 L12.5 19.5 H9.5 L8.8 16.7 L6.4 15.5 L3.7 16.4 L2.2 13.8 L4.3 11.8 V9.2 L2.2 7.2 L3.7 4.6 L6.4 5.5 L8.8 4.3 Z" fill="none" stroke="#e3e5e9" stroke-width="1.8" stroke-linejoin="round"/><circle cx="11" cy="10.5" r="3.2" fill="none" stroke="#e3e5e9" stroke-width="1.9"/></svg>
<svg style="left:1597px;top:85px" width="14" height="14" viewBox="0 0 14 14"><path d="M2 2 L12 12 M12 2 L2 12" stroke="#e3e5e9" stroke-width="2.8" stroke-linecap="round"/></svg>
<div class="a" style="left:1157px;top:135.2px;font-size:18px;line-height:22px;font-weight:400;color:#e0e2e6;letter-spacing:0px;">我需要将<span style="position:relative;top:1px;letter-spacing:0.0px">testcase</span>目录下的<span style="position:relative;top:1px;letter-spacing:0.0px"><span style="letter-spacing:-0.9px">CSV</span></span>测试用例文件转换为<span style="position:relative;top:1px;letter-spacing:0.0px"><span style="letter-spacing:-0.9px">XLSX</span></span></div>
<div class="a" style="left:1157px;top:165.79999999999998px;font-size:18px;line-height:22px;font-weight:400;color:#e0e2e6;letter-spacing:0px;">格式。根据代码分析，这个任务会使用<span style="position:relative;top:1px;letter-spacing:0.0px">utils/csv_to_xlsx.</span></div>
<div class="a" style="left:1157px;top:196.39999999999998px;font-size:18px;line-height:22px;font-weight:400;color:#e0e2e6;letter-spacing:0px;"><span style="position:relative;top:1px;letter-spacing:0.0px">py</span>脚本，该脚本会遍历<span style="position:relative;top:1px;letter-spacing:0.0px">testcase</span>目录下所有<span style="position:relative;top:1px;letter-spacing:0.0px"><span style="letter-spacing:-0.9px">CSV</span></span>文件，将</div>
<div class="a" style="left:1157px;top:227.0px;font-size:18px;line-height:22px;font-weight:400;color:#e0e2e6;letter-spacing:0px;">它们转换为<span style="position:relative;top:1px;letter-spacing:0.0px"><span style="letter-spacing:-0.9px">XLSX</span></span>格式，并删除原始<span style="position:relative;top:1px;letter-spacing:0.0px"><span style="letter-spacing:-0.9px">CSV</span></span>文件。这个转换过</div>
<div class="a" style="left:1157px;top:257.6px;font-size:18px;line-height:22px;font-weight:400;color:#e0e2e6;letter-spacing:0px;">程会保留所有数据，只是改变文件格式，使测试用例更易</div>
<div class="a" style="left:1157px;top:288.2px;font-size:18px;line-height:22px;font-weight:400;color:#e0e2e6;letter-spacing:0px;">于查看和编辑。</div>
<div class="a" style="left:1157px;top:342.5px;font-size:18px;line-height:22px;font-weight:400;color:#e0e2e6;letter-spacing:0px;">需要执行<span style="position:relative;top:1px;letter-spacing:0.0px">csv_to_xlsx.py</span>脚本将<span style="position:relative;top:1px;letter-spacing:0.0px"><span style="letter-spacing:-0.9px">CSV</span></span>文件转换为<span style="position:relative;top:1px;letter-spacing:0.0px"><span style="letter-spacing:-0.9px">XLSX</span></span>格</div>
<div class="a" style="left:1157px;top:372.5px;font-size:18px;line-height:22px;font-weight:400;color:#e0e2e6;letter-spacing:0px;">式。</div>
<div class="a" style="left:1157px;top:410px;width:454px;height:108px;background:#292b33;border-radius:9px"></div>
<svg style="left:1172px;top:426px" width="20" height="19" viewBox="0 0 20 19"><rect x="0.75" y="0.75" width="18.5" height="17.5" rx="4" fill="#2f3139" stroke="#5a5d67" stroke-width="1.5"/><path d="M5 6 L8 9 L5 12 M9 12.5 H14" fill="none" stroke="#a8abb3" stroke-width="1.5" stroke-linecap="round" stroke-linejoin="round"/></svg>
<div class="a" style="left:1202px;top:426px;font-size:17px;line-height:22px;font-weight:400;color:#cfd1d6;letter-spacing:0px;">agent-test</div>
<div class="a" style="left:1532px;top:425px;font-size:17px;line-height:22px;font-weight:400;color:#cfd1d6;letter-spacing:0px;">终端</div>
<svg style="left:1577px;top:429px" width="10" height="13" viewBox="0 0 10 13"><path d="M2 1.5 L7.5 6.5 L2 11.5" fill="none" stroke="#7d808a" stroke-width="1.8" stroke-linecap="round" stroke-linejoin="round"/></svg>
<div class="a" style="left:1172px;top:460px;width:424px;height:43px;background:#3a3c48;border-radius:6px"></div>
<div class="a mono" style="left:1180px;top:473px;font-size:19.5px;line-height:22px;letter-spacing:-1.01px;font-weight:700;color:#f2f3f5">python ./utils/csv_to_xlsx.py</div>
<div class="a" style="left:1157px;top:538.5px;font-size:18px;line-height:22px;font-weight:400;color:#e0e2e6;letter-spacing:0px;">检查<span style="position:relative;top:1px;letter-spacing:0.0px">testcase</span>目录，确认<span style="position:relative;top:1px;letter-spacing:0.0px"><span style="letter-spacing:-0.9px">CSV</span></span>文件是否已成功转换为<span style="position:relative;top:1px;letter-spacing:0.0px"><span style="letter-spacing:-0.9px">XLSX</span></span></div>
<div class="a" style="left:1157px;top:569.5px;font-size:18px;line-height:22px;font-weight:400;color:#e0e2e6;letter-spacing:0px;">格式。</div>
<div class="a" style="left:1157px;top:607px;width:454px;height:49px;background:#292b33;border-radius:9px"></div>
<svg style="left:1172px;top:622px" width="20" height="19" viewBox="0 0 20 19"><rect x="0.75" y="0.75" width="18.5" height="17.5" rx="4" fill="#2f3139" stroke="#5a5d67" stroke-width="1.5"/><circle cx="9.3" cy="8.8" r="3.4" fill="none" stroke="#a8abb3" stroke-width="1.6"/><path d="M11.8 11.3 L14 13.5" stroke="#a8abb3" stroke-width="1.7" stroke-linecap="round"/></svg>
<div class="a" style="left:1202px;top:622px;font-size:17px;line-height:22px;font-weight:400;color:#cfd1d6;letter-spacing:0px;">agent-test<span style="padding:0 1px">\</span>testcase</div>
<div class="a" style="left:1157px;top:677.0px;font-size:18px;line-height:22px;font-weight:400;color:#e0e2e6;letter-spacing:0px;">我已成功将测试用例从<span style="position:relative;top:1px;letter-spacing:0.0px"><span style="letter-spacing:-0.9px">CSV</span></span>格式转换为<span style="position:relative;top:1px;letter-spacing:0.0px"><span style="letter-spacing:-0.9px">XLSX</span></span>格式。</div>
<div class="a" style="left:1157px;top:708.2px;font-size:18px;line-height:22px;font-weight:400;color:#e0e2e6;letter-spacing:0px;">执行了以下操作：</div>
<div class="a" style="left:1165px;top:739.1px;font-size:18px;line-height:22px;font-weight:400;color:#e0e2e6;letter-spacing:0px;"><span style="position:relative;top:1px;letter-spacing:0.0px">1.</span></div>
<div class="a" style="left:1184.5px;top:739.1px;font-size:18px;line-height:22px;font-weight:400;color:#e0e2e6;letter-spacing:0px;">检查了<span style="position:relative;top:1px;letter-spacing:0.0px">testcase</span>目录，发现有一个<span style="position:relative;top:1px;letter-spacing:0.0px"><span style="letter-spacing:-0.9px">CSV</span></span>格式的测试用例</div>
<div class="a" style="left:1184.5px;top:769.5px;font-size:18px;line-height:22px;font-weight:400;color:#e0e2e6;letter-spacing:0px;">文件：<span style="position:relative;top:1px;letter-spacing:0.0px"><span style="letter-spacing:-0.9px">TC</span>_1716451200.csv</span></div>
<div class="a" style="left:1165px;top:806.0px;font-size:18px;line-height:22px;font-weight:400;color:#e0e2e6;letter-spacing:0px;"><span style="position:relative;top:1px;letter-spacing:0.0px">2.</span></div>
<div class="a" style="left:1184.5px;top:806.0px;font-size:18px;line-height:22px;font-weight:400;color:#e0e2e6;letter-spacing:0px;">运行了<span style="position:relative;top:1px;letter-spacing:0.0px">utils/csv_to_xlsx.py</span>脚本，该脚本完成了以下</div>
<div class="a" style="left:1184.5px;top:835.5px;font-size:18px;line-height:22px;font-weight:400;color:#e0e2e6;letter-spacing:0px;">工作：</div>
<div class="a" style="left:1630px;top:622px;width:8px;height:157px;background:#5f6676;border-radius:4px"></div>
<div class="a" style="left:1157px;top:871px;width:453.6px;height:170px;border-radius:9px;padding:2px 1.6px 2px 2px;background:linear-gradient(90deg,#f0605c 0%,#f07fb0 35%,#da9cf0 62%,#ebe2ff 100%)"><div style="width:100%;height:100%;background:#1b1c21;border-radius:7px"></div></div>
<div class="a" style="left:1167px;top:881px;width:435px;height:39px;background:#33353e;border:1px solid #3a3c45;border-radius:5px"></div>
<svg style="left:1176px;top:889px" width="22" height="22" viewBox="0 0 22 22"><circle cx="11" cy="11" r="11" fill="#fdfdfe"/><rect x="6.2" y="7" width="9.7" height="7.8" rx="0.8" fill="#937df2"/><rect x="4" y="9" width="1.2" height="4" rx="0.6" fill="#937df2"/><rect x="16.9" y="9" width="1.2" height="4" rx="0.6" fill="#937df2"/><rect x="8" y="10" width="2" height="1.2" rx="0.6" fill="#d9d0fb"/><rect x="12" y="10" width="2" height="1.2" rx="0.6" fill="#d9d0fb"/></svg>
<div class="a" style="left:1207px;top:889px;font-size:19px;line-height:24px;font-weight:400;color:#eceef1;letter-spacing:0px;">@Builder</div>
<div class="a" style="left:1302px;top:892px;width:1px;height:16px;background:#4a4c55"></div>
<svg style="left:1320px;top:891px" width="19" height="18" viewBox="0 0 19 18"><path d="M11 2.5 L13.5 0.8 L18 5.3 L16.3 7.8 Z" fill="none" stroke="#e3e5e9" stroke-width="1.5" stroke-linejoin="round"/><path d="M12.2 6.6 L2 16.5" stroke="#e3e5e9" stroke-width="3.4" stroke-linecap="round"/><path d="M12.2 6.6 L2 16.5" stroke="#33353e" stroke-width="0.9" stroke-linecap="round"/></svg>
<svg style="left:1575px;top:894px" width="12" height="12" viewBox="0 0 12 12"><path d="M1.5 1.5 L10.5 10.5 M10.5 1.5 L1.5 10.5" stroke="#e3e5e9" stroke-width="2.6" stroke-linecap="round"/></svg>
<div class="a" style="left:1172px;top:930.9px;font-size:18px;line-height:22px;font-weight:400;color:#5f6471;letter-spacing:0px;">您正在与 <span style="position:relative;top:1px;letter-spacing:0.0px">Builder</span> 聊天</div>
<div class="a" style="left:1167px;top:991px;width:33px;height:40px;border:1px solid #32343d;border-radius:6px"></div>
<div class="a" style="left:1208px;top:991px;width:33px;height:40px;border:1px solid #32343d;border-radius:6px"></div>
<div class="a" style="left:1250px;top:991px;width:33px;height:40px;border:1px solid #32343d;border-radius:6px"></div>
<div class="a" style="left:1174px;top:995px;font-size:20px;line-height:24px;font-weight:700;color:#e3e5e9;letter-spacing:-1px">@</div>
<svg style="left:1217px;top:999px" width="17" height="17" viewBox="0 0 17 17"><path d="M6.5 1 L4.8 16 M12.2 1 L10.5 16 M1.2 5.5 H16 M0.8 11.5 H15.6" stroke="#e3e5e9" stroke-width="2.3"/></svg>
<svg style="left:1258px;top:999px" width="16" height="16" viewBox="0 0 16 16"><rect x="0.9" y="0.9" width="14" height="14" rx="0.8" fill="none" stroke="#e3e5e9" stroke-width="1.8"/><path d="M3.3 12.8 L6.5 9.5 L8.3 11 L12.3 6.3 V12.8 Z" fill="#e3e5e9"/><circle cx="4.5" cy="4.5" r="1" fill="#e3e5e9"/></svg>
<div class="a" style="left:1383px;top:991px;width:175px;height:40px;border:1px solid #2e3037;border-radius:6px"></div>
<div class="a" style="left:1394px;top:997px;font-size:17px;line-height:22px;font-weight:700;color:#e6e7ea;letter-spacing:-1px">A\</div>
<div class="a" style="left:1417px;top:998px;font-size:17px;line-height:22px;font-weight:400;color:#a9acb4;letter-spacing:-0.65px;">Claude-3.5-Sonnet</div>
<svg style="left:1573px;top:996px" width="24" height="24" viewBox="0 0 24 24"><path d="M1 7 L23 1 L14 23 L11.5 13 Z" fill="#5d6270"/></svg>
</body></html>
